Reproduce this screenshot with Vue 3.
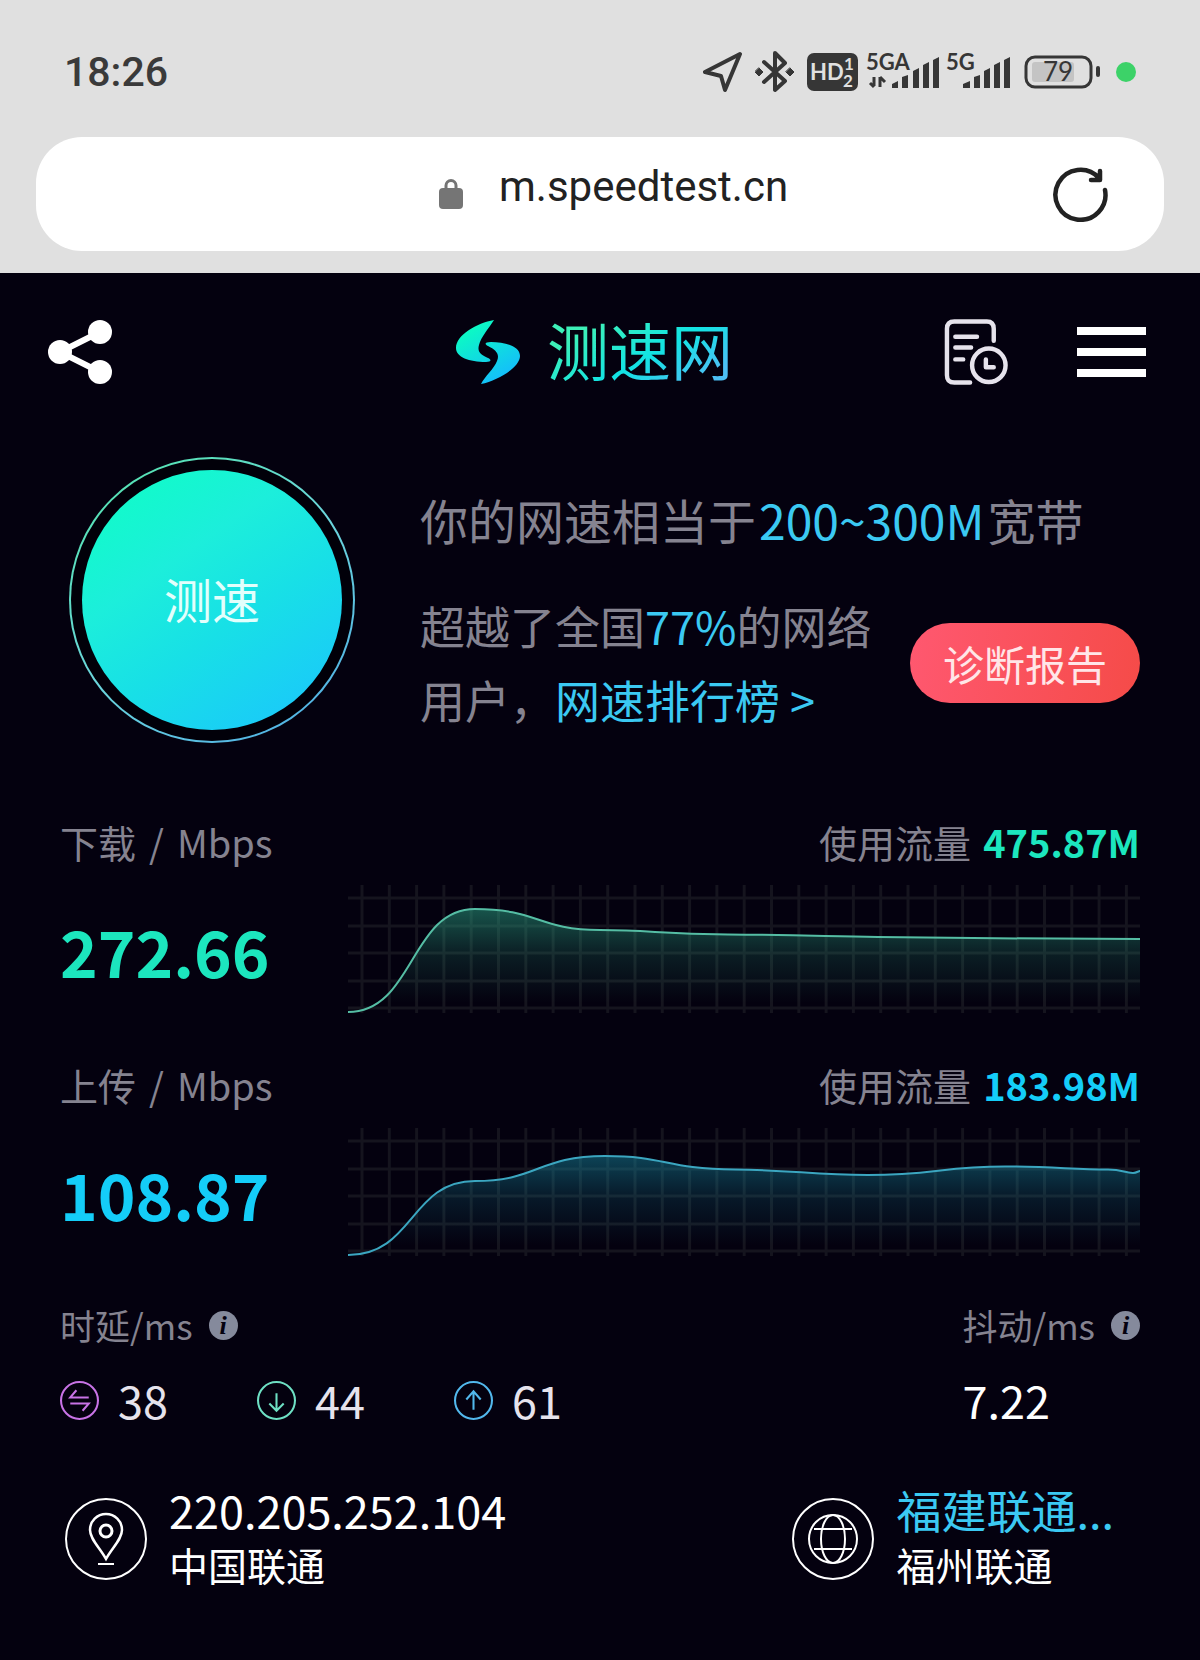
<script setup>
import { ref } from 'vue'

const address = ref('m.speedtest.cn')

// Plot area of each chart: 792 x 130 units
const columns = Array.from({ length: 29 }, (_, i) => 14 + i * 27.3)
const rows = [13, 41, 68, 96, 123]

const metrics = [
  {
    key: 'down',
    label: '下载',
    value: '272.66',
    usage: '475.87M',
    line: 'M0 127C66 127 62 24 127 24C190 24 190 45 252 45C304 45 310 49 380 49.500C450 50 470 51 530 52C620 53 700 54 792 54',
  },
  {
    key: 'up',
    label: '上传',
    value: '108.87',
    usage: '183.98M',
    line: 'M0 127C66 127 62 53 127 53C190 53 190 28 257 28C320 28 315 41 388 41.500C445 42 465 47 520 47C585 47 595 38.500 657 38.500C705 38.500 725 41.500 760 41.500C775 41.500 776 45 785 45C789 45 790 43 792 43',
  },
]

const delays = [
  { key: 'idle', value: '38', icon: 'M28 16H10L16 9M10 22H28L22 29' },
  { key: 'load-down', value: '44', icon: 'M19 12V29M12 22L19 29L26 22' },
  { key: 'load-up', value: '61', icon: 'M19 28V10M12 18L19 10L26 18' },
]
</script>

<template>
  <div class="screen">
    <div class="chrome">
      <div class="status">
        <time class="clock">18:26</time>
        <div class="indicators">
          <svg width="40" height="44" viewBox="0 0 40 44" class="ink">
            <path d="M37 4L2 22L18 26L22 40Z" />
          </svg>
          <svg width="40" height="44" viewBox="0 0 40 44" class="ink bluetooth">
            <path d="M9 12L30 31L20 40V3L30 13L9 32" />
            <path d="M4 18L8 22L4 26L0 22ZM35 18L39 22L35 26L31 22Z" class="solid" />
          </svg>
          <svg width="51" height="38" viewBox="0 0 51 38" class="hd">
            <rect width="51" height="38" rx="7" />
            <text x="3" y="27" font-size="22">HD</text>
            <text x="37" y="17" font-size="17">1</text>
            <text x="36" y="34" font-size="17">2</text>
          </svg>
          <svg width="74" height="54" viewBox="0 -8 74 54" class="signal">
            <text x="0" y="17" font-size="22">5GA</text>
            <path d="M8 24V33M8 34L4 30M14 34V24M14 24L19 29" class="arrows" />
            <path d="M26 35V31L32 28V35ZM36 35V24L42 22V35ZM47 35V18L53 15V35ZM57 35V12L63 9V35ZM67 35V7L73 4V35Z" />
          </svg>
          <svg width="66" height="54" viewBox="0 -8 66 54" class="signal">
            <text x="0" y="17" font-size="22">5G</text>
            <path d="M17 35V31L24 28V35ZM28 35V24L34 22V35ZM38 35V18L44 15V35ZM48 35V12L54 9V35ZM58 35V7L64 4V35Z" />
          </svg>
          <svg width="76" height="34" viewBox="0 0 76 34" class="battery">
            <rect x="8" y="7" width="42" height="20" rx="3" class="charge" />
            <rect x="2" y="2" width="65" height="30" rx="9" class="shell" />
            <path d="M74 13V20" class="tip" />
            <text x="34" y="26" font-size="26" text-anchor="middle">79</text>
          </svg>
          <span class="dot"></span>
        </div>
      </div>
      <div class="address-bar">
        <div class="address">
          <svg width="24" height="30" viewBox="0 0 24 30">
            <rect y="9" width="24" height="21" rx="4" fill="#757575" />
            <path d="M7 10V6.500a5 5 0 0 1 10 0V10" fill="none" stroke="#757575" stroke-width="3" />
          </svg>
          <input v-model="address" type="text" aria-label="网址" />
        </div>
        <button type="button" class="icon-button" aria-label="刷新">
          <svg width="56" height="56" viewBox="0 0 56 56" fill="none" stroke="#222" stroke-width="4.500" stroke-linecap="round" stroke-linejoin="round">
            <path d="M53 24A25 25 0 1 1 47 12M48 5V14H39" />
          </svg>
        </button>
      </div>
    </div>

    <header class="top">
      <button type="button" class="icon-button share" aria-label="分享">
        <svg width="64" height="66" viewBox="0 0 64 66" fill="#fff">
          <path d="M52 13L12 33L52 53" fill="none" stroke="#fff" stroke-width="6" />
          <circle cx="52" cy="13" r="12" />
          <circle cx="12" cy="33" r="12" />
          <circle cx="52" cy="53" r="12" />
        </svg>
      </button>
      <h1 class="brand">
        <svg width="66" height="66" viewBox="0 0 66 66">
          <defs>
            <linearGradient id="brand-fill" x1="0" y1="0" x2="0.600" y2="1">
              <stop offset="0.200" stop-color="#0cfac4" />
              <stop offset="1" stop-color="#14bdfc" />
            </linearGradient>
          </defs>
          <path d="M39 1C22 4 1 16 1 29C1 38 14 43 31 43C36 43 37 41 33 39C26 36 22 33 24 26C26 18 34 9 39 1ZM26 65C44 61 65 48 65 37C65 27 50 23 36 23C30 23 29 25 33 27C41 31 45 35 42 42C39 50 30 57 26 65Z" fill="url(#brand-fill)" />
        </svg>
        <span>测速网</span>
      </h1>
      <div class="actions">
        <button type="button" class="icon-button" aria-label="测速记录">
          <svg width="66" height="66" viewBox="0 0 66 67" fill="none" stroke="#e6e3ec" stroke-width="4.500" stroke-linecap="round">
            <path d="M50 22V10Q50 2.500 43 2.500H10Q2.500 2.500 2.500 10V57Q2.500 64.500 10 64.500H26" />
            <path d="M11 18H33M11 29H27M11 41H19" />
            <circle cx="45" cy="47" r="17" />
            <path d="M42 41V49H50" stroke-linejoin="round" />
          </svg>
        </button>
        <button type="button" class="icon-button" aria-label="菜单">
          <svg width="69" height="50" viewBox="0 0 69 50" fill="#fff">
            <path d="M0 0H69V8H0ZM0 21H69V29H0ZM0 42H69V50H0Z" />
          </svg>
        </button>
      </div>
    </header>

    <main>
      <section class="hero">
        <button type="button" class="start"><span>测速</span></button>
        <div class="summary">
          <p class="equivalent">你的网速相当于<em>200~300M</em>宽带</p>
          <div class="ranking">
            <p>超越了全国<em>77%</em>的网络<br />用户，<a href="#rank">网速排行榜 &gt;</a></p>
            <button type="button" class="report">诊断报告</button>
          </div>
        </div>
      </section>

      <section v-for="m in metrics" :key="m.key" class="metric" :class="m.key">
        <h2><span>{{ m.label }}</span><span>/</span><span>Mbps</span></h2>
        <p class="usage">使用流量<strong>{{ m.usage }}</strong></p>
        <p class="speed">{{ m.value }}</p>
        <svg class="chart" viewBox="0 0 792 130" preserveAspectRatio="none">
          <defs>
            <linearGradient :id="'fill-' + m.key" gradientUnits="userSpaceOnUse" x1="0" y1="20" x2="0" y2="118">
              <stop offset="0" stop-color="currentColor" stop-opacity="0.550" />
              <stop offset="0.500" stop-color="currentColor" stop-opacity="0.180" />
              <stop offset="1" stop-color="currentColor" stop-opacity="0" />
            </linearGradient>
          </defs>
          <g class="grid">
            <path v-for="x in columns" :key="'c' + x" :d="`M${x} 0V128`" />
            <path v-for="y in rows" :key="'r' + y" :d="`M0 ${y}H792`" />
          </g>
          <path :d="m.line + 'V127H0Z'" :fill="`url(#fill-${m.key})`" />
          <path :d="m.line" class="curve" />
        </svg>
      </section>

      <section class="timing">
        <div class="delay">
          <h2>
            时延/ms
            <button type="button" class="info" aria-label="时延说明">i</button>
          </h2>
          <ul>
            <li v-for="d in delays" :key="d.key" :class="d.key">
              <svg width="39" height="39" viewBox="0 0 38 38" fill="none" stroke="currentColor" stroke-width="2">
                <circle cx="19" cy="19" r="18" />
                <path :d="d.icon" />
              </svg>
              {{ d.value }}
            </li>
          </ul>
        </div>
        <div class="jitter">
          <h2>
            抖动/ms
            <button type="button" class="info" aria-label="抖动说明">i</button>
          </h2>
          <p>7.22</p>
        </div>
      </section>

      <section class="network">
        <div class="place">
          <svg width="82" height="82" viewBox="0 0 82 82" fill="none" stroke="#fff" stroke-width="2">
            <circle cx="41" cy="41" r="40" />
            <path d="M41 61C35 50 25 41 25 32A16 16 0 0 1 57 32C57 41 47 50 41 61Z" stroke-width="2.500" />
            <circle cx="41" cy="33" r="6" stroke-width="3" />
            <path d="M33 66H49" />
          </svg>
          <div>
            <p class="primary">220.205.252.104</p>
            <p class="secondary">中国联通</p>
          </div>
        </div>
        <div class="place server">
          <svg width="82" height="82" viewBox="0 0 82 82" fill="none" stroke="#fff" stroke-width="2">
            <circle cx="41" cy="41" r="40" />
            <circle cx="41" cy="41" r="24" />
            <ellipse cx="41" cy="41" rx="12" ry="24" />
            <path d="M22 31H60M22 51H60" />
          </svg>
          <div>
            <p class="primary"><a href="#server">福建联通...</a></p>
            <p class="secondary">福州联通</p>
          </div>
        </div>
      </section>
    </main>
  </div>
</template>

<style>
body {
  margin: 0;
  background: #04010f;
}
</style>

<style scoped>
.screen {
  font-family: 'Noto Sans CJK SC', sans-serif;
  color: #fff;
}

h1, h2, p, ul {
  margin: 0;
  padding: 0;
  font-weight: 400;
}

svg {
  display: block;
  flex: none;
}

button {
  padding: 0;
  border: 0;
  background: none;
  font-family: inherit;
  color: inherit;
  cursor: pointer;
}

a {
  color: #3bc9f2;
  text-decoration: none;
}

em {
  font-style: normal;
  color: #3bc9f2;
}

.chrome {
  padding: 44px 36px 22px;
  background: #e0e0e0;
}

.status {
  display: flex;
  align-items: center;
  justify-content: space-between;
  height: 56px;
  padding: 0 28px;
  margin-bottom: 37px;
}

.clock {
  font: 500 41px/56px Roboto, sans-serif;
  color: #3a3a3a;
}

.indicators {
  display: flex;
  align-items: center;
  gap: 12px;
}

.indicators svg {
  font-family: Lato, sans-serif;
  font-weight: 700;
}

.ink {
  fill: none;
  stroke: #363636;
  stroke-width: 4;
  stroke-linejoin: round;
  stroke-linecap: round;
}

.ink .solid {
  fill: #363636;
  stroke-width: 1;
}

.hd rect {
  fill: #363636;
}

.hd text {
  fill: #e0e0e0;
}

.hd + .signal {
  margin-left: -4px;
}

.signal + .signal {
  margin-left: -6px;
}

.signal {
  fill: #363636;
}

.signal .arrows {
  fill: none;
  stroke: #363636;
  stroke-width: 3;
}

.battery .charge {
  fill: #c4c4c4;
}

.battery .shell,
.battery .tip {
  fill: none;
  stroke: #363636;
  stroke-width: 3;
}

.battery .tip {
  stroke-width: 4;
  stroke-linecap: round;
}

.battery text {
  fill: #363636;
  font-weight: 400;
}

.dot {
  width: 20px;
  height: 20px;
  margin-left: 4px;
  border-radius: 50%;
  background: #3cd268;
}

.address-bar {
  display: grid;
  grid-template-columns: 56px 1fr 56px;
  align-items: center;
  height: 114px;
  padding: 0 56px;
  border-radius: 46px;
  background: #fff;
}

.address {
  grid-column: 2;
  display: flex;
  align-items: center;
  justify-content: center;
  gap: 36px;
  padding-left: 38px;
}

.address input {
  width: 300px;
  padding: 0 0 14px;
  border: 0;
  outline: 0;
  background: none;
  font: 400 42px/56px Roboto, sans-serif;
  color: #222;
}

.top {
  display: grid;
  grid-template-columns: 1fr auto 1fr;
  align-items: center;
  padding: 46px 54px 0 48px;
}

.share {
  justify-self: start;
}

.brand {
  display: flex;
  align-items: center;
  gap: 26px;
  height: 66px;
  margin-right: 6px;
}

.brand span {
  padding-bottom: 6px;
  font-size: 62px;
  line-height: 66px;
  background: linear-gradient(150deg, #3df0b8 20%, #12e3e3 55%, #4cc0f5 85%);
  background-clip: text;
  color: transparent;
}

.actions {
  display: flex;
  align-items: center;
  justify-content: flex-end;
  gap: 67px;
}

main {
  padding: 72px 60px 60px;
}

.hero {
  display: flex;
  gap: 65px;
  padding-left: 9px;
}

.start {
  flex: none;
  display: grid;
  width: 286px;
  height: 286px;
  padding: 11px;
  border: 2px solid transparent;
  border-radius: 50%;
  background:
    linear-gradient(#010009, #010009) padding-box,
    linear-gradient(145deg, #4fe6a8, #6cd6dc 50%, #4aa9e6) border-box;
}

.start span {
  display: grid;
  place-items: center;
  padding-bottom: 4px;
  border-radius: 50%;
  background: linear-gradient(145deg, #12facb 12%, #1ceedb 35%, #18e0e6 58%, #1acbf8 88%);
  font-size: 48px;
  color: #e2fffc;
}

.summary {
  flex: 1;
  padding-top: 25px;
  color: #858390;
}

.equivalent {
  font-size: 48px;
  line-height: 74px;
}

.equivalent em {
  padding: 0 3px;
}

.ranking {
  display: flex;
  align-items: center;
  gap: 20px;
  margin-top: 33px;
}

.ranking p {
  flex: 1;
  font-size: 45px;
  line-height: 74px;
}

.report {
  flex: none;
  width: 230px;
  height: 80px;
  border-radius: 40px;
  background: linear-gradient(100deg, #ff5870, #f54b48);
  font-size: 41px;
  line-height: 80px;
  color: #ffe6e8;
}

.metric {
  display: grid;
  grid-template-columns: 288px 1fr;
  align-items: center;
  row-gap: 20px;
  margin-top: 47px;
}

.hero + .metric {
  margin-top: 76px;
}

.metric h2,
.usage {
  font-size: 38px;
  line-height: 46px;
  color: #858390;
}

.metric h2 {
  display: flex;
  gap: 13px;
}

.usage {
  text-align: right;
}

.usage strong {
  margin-left: 12px;
}

.speed {
  font-size: 64px;
  font-weight: 700;
  line-height: 80px;
}

.down .speed,
.down strong {
  color: #1ce6be;
}

.up .speed,
.up strong {
  color: #14cdf8;
}

.chart {
  width: 100%;
  height: 130px;
}

.down .chart {
  color: #2aa283;
}

.up .chart {
  color: #1688a0;
}

.grid {
  stroke: #15141e;
  stroke-width: 3;
}

.curve {
  fill: none;
  stroke-width: 2;
}

.down .curve {
  stroke: #55bda4;
}

.up .curve {
  stroke: #3ba6c0;
}

.timing {
  display: flex;
  justify-content: space-between;
  margin-top: 44px;
}

.timing h2 {
  display: flex;
  align-items: center;
  gap: 16px;
  margin-bottom: 25px;
  font-size: 35px;
  line-height: 46px;
  color: #858390;
}

.info {
  width: 29px;
  height: 29px;
  border-radius: 50%;
  background: #858a9c;
  font: italic 700 26px/29px 'Liberation Serif', serif;
  color: #04010f;
}

.delay ul {
  display: flex;
  list-style: none;
}

.delay li {
  display: flex;
  align-items: center;
  gap: 19px;
  width: 197px;
  color: #e6e3ec;
}

.delay li,
.jitter p {
  font-size: 45px;
  line-height: 54px;
}

.idle svg {
  color: #c873e6;
}

.load-down svg {
  color: #6ee0c4;
}

.load-up svg {
  color: #52b8ec;
}

.network {
  display: flex;
  justify-content: space-between;
  margin-top: 56px;
  padding: 0 26px 0 5px;
}

.place {
  display: flex;
  align-items: center;
  gap: 22px;
}

.place div {
  padding-bottom: 4px;
}

.primary {
  font-size: 45px;
  line-height: 54px;
}

.secondary {
  font-size: 39px;
  line-height: 54px;
}
</style>
